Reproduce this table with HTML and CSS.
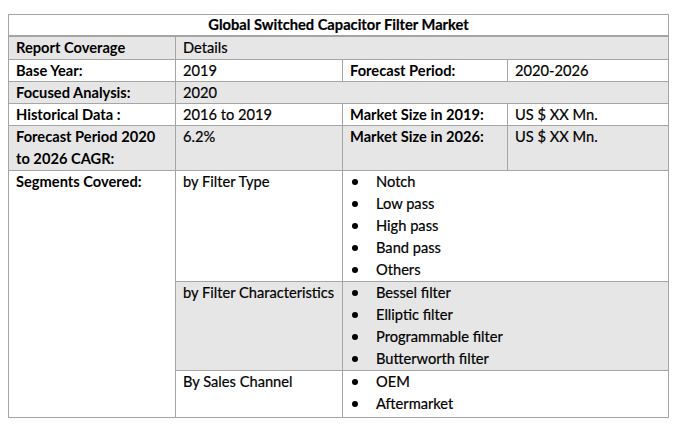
FILE: index.html
```html
<!DOCTYPE html>
<html>
<head>
<meta charset="utf-8">
<link rel="stylesheet" href="styles.css">
</head>
<body>
<table class="report">
  <colgroup>
    <col class="c1"><col class="c2"><col class="c3"><col class="c4">
  </colgroup>
  <tr class="title"><td colspan="4">Global Switched Capacitor Filter Market</td></tr>
  <tr class="shade first"><td class="key">Report Coverage</td><td colspan="3">Details</td></tr>
  <tr><td class="key">Base Year:</td><td>2019</td><td class="key">Forecast Period:</td><td>2020-2026</td></tr>
  <tr class="shade"><td class="key">Focused Analysis:</td><td colspan="3">2020</td></tr>
  <tr><td class="key">Historical Data :</td><td>2016 to 2019</td><td class="key">Market Size in 2019:</td><td>US $ XX Mn.</td></tr>
  <tr class="shade tall"><td class="key">Forecast Period 2020 to 2026 CAGR:</td><td>6.2%</td><td class="key">Market Size in 2026:</td><td>US $ XX Mn.</td></tr>
  <tr class="seg">
    <td class="key white" rowspan="3">Segments Covered:</td>
    <td>by Filter Type</td>
    <td colspan="2" class="list-cell">
      <ul class="bullets">
        <li>Notch</li><li>Low pass</li><li>High pass</li><li>Band pass</li><li>Others</li>
      </ul>
    </td>
  </tr>
  <tr class="shade seg">
    <td>by Filter Characteristics</td>
    <td colspan="2" class="list-cell">
      <ul class="bullets">
        <li>Bessel filter</li><li>Elliptic filter</li><li>Programmable filter</li><li>Butterworth filter</li>
      </ul>
    </td>
  </tr>
  <tr class="seg last">
    <td>By Sales Channel</td>
    <td colspan="2" class="list-cell">
      <ul class="bullets">
        <li>OEM</li><li>Aftermarket</li>
      </ul>
    </td>
  </tr>
</table>
</body>
</html>
```
FILE: styles.css
```css
html, body {
  margin: 0;
  padding: 0;
  background: #ffffff;
}
body {
  padding: 14px 0 0 8px;
  font-family: "Lato", "Liberation Sans", sans-serif;
  font-size: 14.67px;
  color: #000000;
}
.report {
  border-collapse: collapse;
  width: 660px;
  table-layout: fixed;
}
.c1 { width: 167px; }
.c2 { width: 167px; }
.c3 { width: 165px; }
.c4 { width: 161px; }
.report td {
  border: 1px solid #a5a5a5;
  padding: 0 7px;
  line-height: 21px;
  vertical-align: top;
  text-align: left;
  -webkit-text-stroke: 0.2px #000000;
}
.report .title td {
  text-align: center;
  font-weight: 700;
  line-height: 20px;
  border-bottom: 2px solid #a5a5a5;
}
.report .first td {
  line-height: 22px;
}
.report .tall td,
.report .seg td {
  line-height: 22px;
}
.report .last td {
  padding-bottom: 2px;
}
.shade td {
  background: #e7e6e6;
}
.shade td.white, td.white {
  background: #ffffff;
}
.key {
  font-weight: 700;
}
.report td.key {
  -webkit-text-stroke: 0;
}
.report td.list-cell {
  padding-left: 0;
}
.bullets {
  list-style: none;
  margin: 0;
  padding: 0 0 0 33px;
}
.bullets li {
  position: relative;
}
.bullets li::before {
  content: "";
  position: absolute;
  left: -24px;
  top: 8px;
  width: 6px;
  height: 6px;
  border-radius: 50%;
  background: #000000;
}
```
